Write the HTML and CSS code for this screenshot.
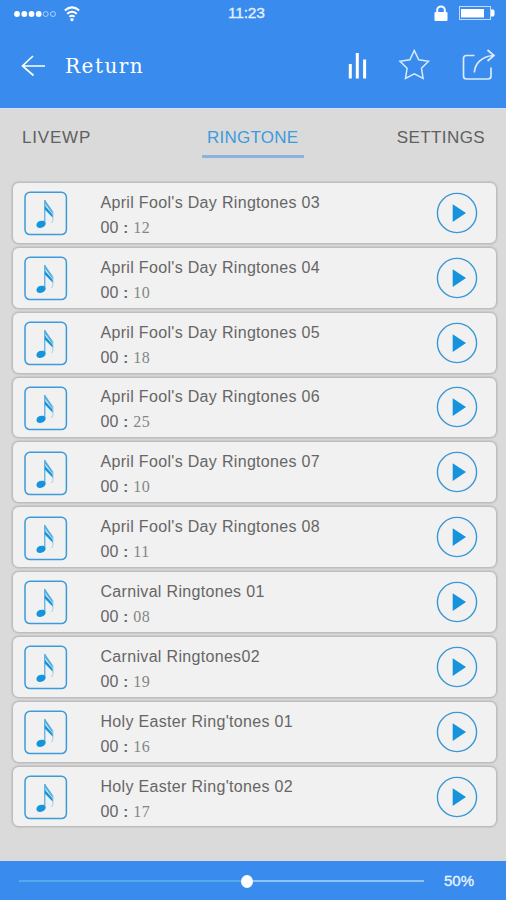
FILE: index.html
```html
<!DOCTYPE html>
<html lang="en">
<head>
<meta charset="utf-8">
<title>Ringtones</title>
<link rel="stylesheet" href="styles.css">
</head>
<body>
<svg class="defs" width="0" height="0" aria-hidden="true">
  <symbol id="note" viewBox="0 0 44 45">
    <rect x="1" y="1.2" width="41.4" height="42.4" rx="5" fill="none" stroke="#3d9bd9" stroke-width="1.5"/>
    <path d="M20.8 9V33" stroke="#3fa3dc" stroke-width="1.1" fill="none"/>
    <ellipse cx="17" cy="33.3" rx="4.7" ry="3.5" transform="rotate(-20 17 33.3)" fill="#1595dc"/>
    <path d="M20.8 8.500L29 20.500V23.500L20.800 12.500Z" fill="#58addf"/>
    <path d="M20.800 14.500L29 24V27L20.800 18.500Z" fill="#1595dc"/>
    <path d="M29 20V27Q29.200 30 27.600 32" stroke="#a2cde5" stroke-width="1" fill="none"/>
  </symbol>
  <symbol id="play" viewBox="0 0 42 42">
    <circle cx="21" cy="21" r="19.600" fill="none" stroke="#3998d5" stroke-width="1.400"/>
    <path d="M16.700 12.200V30L30 21Z" fill="#1593dc"/>
  </symbol>
</svg>
<header class="header">
  <div class="status">
    <svg class="signal" width="70" height="20" viewBox="0 0 70 20">
      <g fill="#fff"><circle cx="5" cy="10" r="2.900"/><circle cx="12.300" cy="10" r="2.900"/><circle cx="19.500" cy="10" r="2.900"/><circle cx="26.700" cy="10" r="2.900"/></g>
      <g fill="none" stroke="#c9dffb" stroke-width=".8"><circle cx="33.700" cy="10" r="2.500"/><circle cx="41" cy="10" r="2.500"/></g>
      <g fill="none" stroke="#fff" stroke-width="2"><path d="M52.800 6.500Q60 .2 67.200 6.500"/><path d="M55.200 9.800Q60 5.700 64.800 9.800"/><path d="M57.400 12.800Q60 10.700 62.600 12.800"/></g>
      <circle cx="60" cy="15.600" r="1.700" fill="#fff"/>
    </svg>
    <span class="clock">11:23</span>
    <svg class="power" width="62" height="20" viewBox="0 0 62 20">
      <path d="M4.200 10V6.200a3.800 3.800 0 0 1 7.600 0V10" fill="none" stroke="#fff" stroke-width="2"/>
      <rect x="1.500" y="8" width="13" height="9" rx="1" fill="#fff"/>
      <rect x="26.500" y="2.500" width="31" height="13" fill="none" stroke="#c4dbfa"/>
      <rect x="28" y="5" width="23" height="8.500" fill="#fff"/>
      <path d="M58 5.500h2.500l1 1.500v4l-1 1.500H58z" fill="#fff"/>
    </svg>
  </div>
  <div class="bar">
    <svg class="back" width="26" height="24" viewBox="0 0 26 24"><path d="M12 2L1.500 12L12.500 21.500M1.500 12H24" fill="none" stroke="#fff" stroke-width="1.700"/></svg>
    <h1 class="title">Return</h1>
    <svg class="actions" width="150" height="34" viewBox="0 0 150 34">
      <path d="M4.300 15V29.500M11.300 4V29.500M18.600 10.500V29.500" stroke="#fff" stroke-width="3" fill="none"/>
      <path d="M68.300 1.500L72.700 10.800L82.500 12.200L75.500 19.300L77.100 29.400L68.300 24.800L59.500 29.400L61.100 19.300L54 12.200L63.900 10.800Z" fill="none" stroke="#dceafd" stroke-width="1.500"/>
      <path d="M128.500 6.500H120.500Q117.500 6.500 117.500 9.500V27Q117.500 30 120.500 30H142Q145 30 145 27V18.500" fill="none" stroke="#dceafd" stroke-width="1.700"/>
      <path d="M128.300 23.500C129 14 136 7.500 147 6.500M141.500 1L148 6.500L141.500 12" fill="none" stroke="#dceafd" stroke-width="1.700"/>
    </svg>
  </div>
</header>
<nav class="tabs">
  <a class="tab livewp">LIVEWP</a>
  <a class="tab active">RINGTONE</a>
  <a class="tab settings">SETTINGS</a>
</nav>
<main class="list">
  <article class="row"><svg class="note"><use href="#note"/></svg><div class="info"><h2 class="name">April Fool's Day Ringtones 03</h2><p class="time">00<b>:</b><span>12</span></p></div><svg class="play"><use href="#play"/></svg></article>
  <article class="row"><svg class="note"><use href="#note"/></svg><div class="info"><h2 class="name">April Fool's Day Ringtones 04</h2><p class="time">00<b>:</b><span>10</span></p></div><svg class="play"><use href="#play"/></svg></article>
  <article class="row"><svg class="note"><use href="#note"/></svg><div class="info"><h2 class="name">April Fool's Day Ringtones 05</h2><p class="time">00<b>:</b><span>18</span></p></div><svg class="play"><use href="#play"/></svg></article>
  <article class="row"><svg class="note"><use href="#note"/></svg><div class="info"><h2 class="name">April Fool's Day Ringtones 06</h2><p class="time">00<b>:</b><span>25</span></p></div><svg class="play"><use href="#play"/></svg></article>
  <article class="row"><svg class="note"><use href="#note"/></svg><div class="info"><h2 class="name">April Fool's Day Ringtones 07</h2><p class="time">00<b>:</b><span>10</span></p></div><svg class="play"><use href="#play"/></svg></article>
  <article class="row"><svg class="note"><use href="#note"/></svg><div class="info"><h2 class="name">April Fool's Day Ringtones 08</h2><p class="time">00<b>:</b><span>11</span></p></div><svg class="play"><use href="#play"/></svg></article>
  <article class="row"><svg class="note"><use href="#note"/></svg><div class="info"><h2 class="name">Carnival Ringtones 01</h2><p class="time">00<b>:</b><span>08</span></p></div><svg class="play"><use href="#play"/></svg></article>
  <article class="row"><svg class="note"><use href="#note"/></svg><div class="info"><h2 class="name">Carnival Ringtones02</h2><p class="time">00<b>:</b><span>19</span></p></div><svg class="play"><use href="#play"/></svg></article>
  <article class="row"><svg class="note"><use href="#note"/></svg><div class="info"><h2 class="name">Holy Easter Ring'tones 01</h2><p class="time">00<b>:</b><span>16</span></p></div><svg class="play"><use href="#play"/></svg></article>
  <article class="row"><svg class="note"><use href="#note"/></svg><div class="info"><h2 class="name">Holy Easter Ring'tones 02</h2><p class="time">00<b>:</b><span>17</span></p></div><svg class="play"><use href="#play"/></svg></article>
</main>
<footer class="footer">
  <div class="track played"></div><div class="knob"></div><div class="track"></div>
  <span class="percent">50%</span>
</footer>
</body>
</html>
```
FILE: styles.css
```css
* { box-sizing: border-box; }
body {
  margin: 0;
  width: 506px;
  height: 900px;
  display: flex;
  flex-direction: column;
  overflow: hidden;
  background: #dadada;
  font-family: "Liberation Sans", sans-serif;
}
h1, h2, p { margin: 0; font-weight: 400; }
svg { display: block; flex: none; }
.defs { position: absolute; }
.header { height: 109px; flex: none; background: #398cee; border-bottom: 1px solid #cfe2f2; color: #fff; }
.status {
  height: 26px;
  padding: 4px 11px 0 12px;
  display: grid;
  grid-template-columns: 216px auto 1fr;
}
.clock { font-size: 15.500px; line-height: 17px; letter-spacing: -.2px; color: #e6f1ff; -webkit-text-stroke: .3px #e6f1ff; }
.power { justify-self: end; }
.bar { height: 80px; padding: 0 10px 0 21px; display: flex; align-items: center; }
.title {
  margin-left: 18px;
  font: 400 20px/28px "DejaVu Serif", serif;
  letter-spacing: 1.500px;
}
.actions { margin-left: auto; }
.tabs { height: 73px; flex: none; padding: 15px 21px 0 22px; display: grid; grid-template-columns: 180px 102px 1fr; align-items: start; }
.tab { height: 34px; font-size: 17px; line-height: 27px; color: #606060; letter-spacing: .8px; }
.settings { justify-self: end; letter-spacing: .4px; }
.active { padding-left: 5px; color: #3d9bdd; border-bottom: 3px solid #8cb3df; letter-spacing: .25px; }
.list { flex: none; padding: 0 9px 0 12px; display: flex; flex-direction: column; gap: 3px; }
.row {
  height: 61.850px;
  display: flex;
  align-items: center;
  padding: 0 18px 0 11px;
  background: #f1f1f1;
  border: 1px solid #bdbdbd;
  border-width: 1px 1px 1.500px;
  border-radius: 7px;
  box-shadow: 0 0 1px 1px #c9c9c9;
}
.note { width: 44px; height: 45px; margin-top: 2px; }
.info { flex: 1; padding: 6px 0 0 32.500px; }
.name { height: 24px; font-size: 16px; line-height: 22px; letter-spacing: .32px; color: #666; white-space: nowrap; }
.time { height: 24px; display: flex; font-size: 16px; line-height: 24px; color: #666; }
.time b { width: 15px; text-align: center; font-size: 15px; }
.time span { color: #858585; font-family: "Liberation Serif", serif; letter-spacing: .5px; }
.play { width: 42px; height: 42px; }
.footer { height: 39px; margin-top: auto; padding: 0 19px; display: flex; align-items: center; background: #398cee; }
.track { width: 171px; height: 2px; background: #91c3f8; }
.played { width: 222px; background: #55a9ed; }
.knob { width: 12px; height: 13px; border-radius: 50%; background: #fff; margin-top: 2px; }
.percent { margin-left: 20px; color: #edf5ff; font-size: 15px; line-height: 20px; -webkit-text-stroke: .3px #edf5ff; }
```
